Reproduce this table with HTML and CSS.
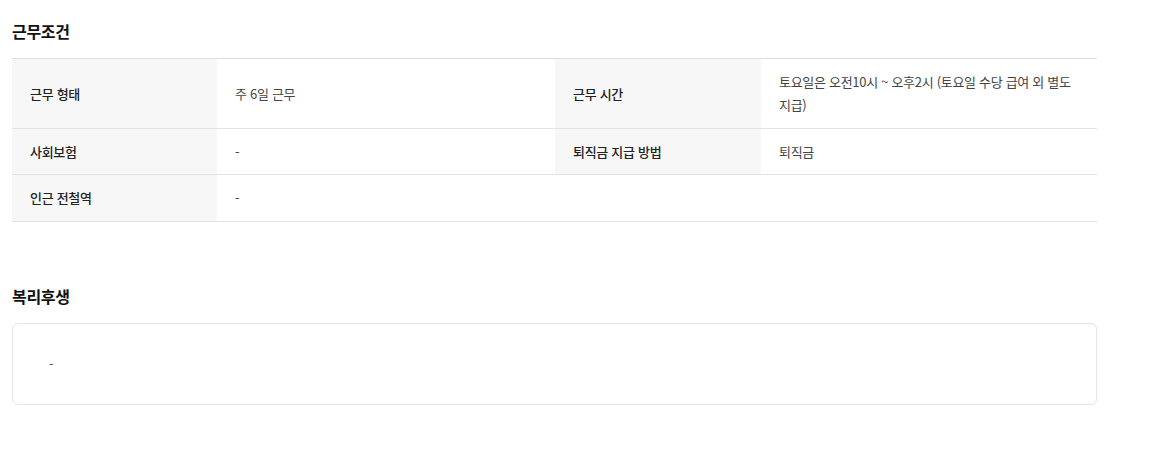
FILE: index.html
```html
<!DOCTYPE html>
<html lang="ko">
<head>
<meta charset="utf-8">
<link rel="stylesheet" href="styles.css">
</head>
<body>
<div class="page">
  <section class="section">
    <h2 class="section-title">근무조건</h2>
    <div class="cond-table">
      <div class="cell head">근무 형태</div>
      <div class="cell value">주 6일 근무</div>
      <div class="cell head">근무 시간</div>
      <div class="cell value">토요일은 오전10시 ~ 오후2시 (토요일 수당 급여 외 별도 지급)</div>

      <div class="cell head">사회보험</div>
      <div class="cell value">-</div>
      <div class="cell head">퇴직금 지급 방법</div>
      <div class="cell value">퇴직금</div>

      <div class="cell head">인근 전철역</div>
      <div class="cell value">-</div>
      <div class="cell empty"></div>
      <div class="cell empty"></div>
    </div>
  </section>
  <section class="section welfare">
    <h2 class="section-title">복리후생</h2>
    <div class="welfare-box">-</div>
  </section>
</div>
</body>
</html>
```
FILE: styles.css
```css
* { box-sizing: border-box; }
body {
  margin: 0;
  background: #fff;
  font-family: "Noto Sans CJK KR", "Noto Sans", sans-serif;
  color: #222;
}
.page {
  width: 1085px;
  margin-left: 12px;
  padding-top: 19px;
}
.section-title {
  margin: 0;
  font-size: 16px;
  font-weight: 700;
  line-height: 25px;
  color: #111;
  letter-spacing: -0.3px;
}
.cond-table {
  margin-top: 14px;
  display: grid;
  grid-template-columns: 205px 338px 206px 336px;
  border-top: 1px solid #dedede;
}
.cell {
  border-bottom: 1px solid #e3e3e3;
  font-size: 13px;
  line-height: 23px;
  padding: 11px 18px 11.5px 18px;
  display: flex;
  align-items: center;
  letter-spacing: -0.3px;
}
.head {
  background: #f7f7f7;
  font-weight: 500;
  color: #222;
}
.value {
  color: #444;
}
.empty {
  background: #fff;
}
.welfare {
  margin-top: 62px;
}
.welfare-box {
  margin-top: 14px;
  height: 82px;
  border: 1px solid #e5e5e5;
  border-radius: 6px;
  padding: 0 36px;
  display: flex;
  align-items: center;
  font-size: 13px;
  color: #555;
}
```
